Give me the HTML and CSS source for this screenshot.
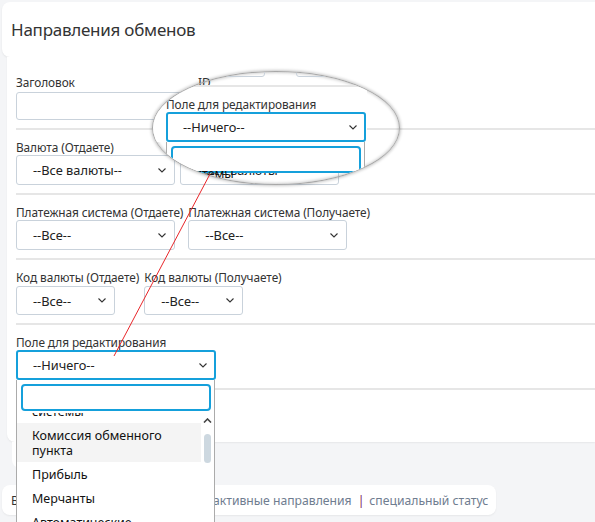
FILE: index.html
```html
<!DOCTYPE html>
<html lang="ru">
<head>
<meta charset="utf-8">
<title>Направления обменов</title>
<link rel="stylesheet" href="styles.css">
</head>
<body>
<div class="header">Направления обменов</div>

<div class="panel">
  <div class="row first">
    <div class="field"><div class="label">Заголовок</div><div class="input w-title"></div></div>
    <div class="field"><div class="label">ID</div><div class="input w-id"></div></div>
  </div>
  <div class="row">
    <div class="field"><div class="label">Валюта (Отдаете)</div><div class="select w159"><span>--Все валюты--</span><svg class="chev" width="8" height="5" viewBox="0 0 8 5"><polyline points="0.5,0.5 4,4 7.5,0.5"/></svg></div></div>
    <div class="field"><div class="label">Валюта (Получаете)</div><div class="select w159"><span>--Все валюты--</span><svg class="chev" width="8" height="5" viewBox="0 0 8 5"><polyline points="0.5,0.5 4,4 7.5,0.5"/></svg></div></div>
  </div>
  <div class="row">
    <div class="field"><div class="label">Платежная система (Отдаете)</div><div class="select w159"><span>--Все--</span><svg class="chev" width="8" height="5" viewBox="0 0 8 5"><polyline points="0.5,0.5 4,4 7.5,0.5"/></svg></div></div>
    <div class="field"><div class="label">Платежная система (Получаете)</div><div class="select w159"><span>--Все--</span><svg class="chev" width="8" height="5" viewBox="0 0 8 5"><polyline points="0.5,0.5 4,4 7.5,0.5"/></svg></div></div>
  </div>
  <div class="row">
    <div class="field"><div class="label">Код валюты (Отдаете)</div><div class="select w99 short"><span>--Все--</span><svg class="chev" width="8" height="5" viewBox="0 0 8 5"><polyline points="0.5,0.5 4,4 7.5,0.5"/></svg></div></div>
    <div class="field"><div class="label">Код валюты (Получаете)</div><div class="select w99 short"><span>--Все--</span><svg class="chev" width="8" height="5" viewBox="0 0 8 5"><polyline points="0.5,0.5 4,4 7.5,0.5"/></svg></div></div>
  </div>
  <div class="row">
    <div class="field"><div class="label">Поле для редактирования</div><div class="select focus w200"><span>--Ничего--</span><svg class="chev" width="8" height="5" viewBox="0 0 8 5"><polyline points="0.5,0.5 4,4 7.5,0.5"/></svg></div></div>
  </div>
  <div class="row empty"></div>
</div>
<div class="panel-foot"></div>

<div class="tabs">
  <span class="tab tab-all">Все направления</span>
  <span class="tab">активные направления</span>
  <span class="sep">|</span>
  <span class="tab">специальный статус</span>
</div>

<!-- open dropdown of "Поле для редактирования" -->
<div class="dropdown">
  <div class="search"></div>
  <div class="list">
    <div class="list-inner">
      <div class="item">Платежные<br>системы</div>
      <div class="item hover">Комиссия обменного пункта</div>
      <div class="item">Прибыль</div>
      <div class="item">Мерчанты</div>
      <div class="item">Автоматические выплаты</div>
    </div>
  </div>
  <svg class="sb-up" width="9" height="5" viewBox="0 0 9 5"><polyline points="1,4.5 4.5,1 8,4.5"/></svg>
  <div class="sb-thumb"></div>
</div>

<!-- magnifier callout -->
<div class="magnifier">
  <div class="m-box m-sel1"></div>
  <div class="m-box m-sel2"></div>
  <div class="m-line"></div>
  <div class="m-white"></div>
  <div class="m-label">Поле для редактирования</div>
  <div class="select focus w200 m-select"><span>--Ничего--</span><svg class="chev" width="8" height="5" viewBox="0 0 8 5"><polyline points="0.5,0.5 4,4 7.5,0.5"/></svg></div>
  <div class="m-drop">
    <div class="search"></div>
    <div class="m-text">системы</div>
  </div>
</div>

<svg class="arrow" width="595" height="522" viewBox="0 0 595 522"><line x1="210" y1="174" x2="114" y2="356"/></svg>
</body>
</html>
```

FILE: styles.css
```css
html, body {
  margin: 0;
  height: 522px;
  overflow: hidden;
}
body {
  position: relative;
  width: 595px;
  background: #f4f5f7;
  font-family: "Noto Sans", "Open Sans", sans-serif;
  color: #333;
}

.header {
  margin: 2px 0 0 2px;
  height: 55px;
  box-sizing: border-box;
  padding-left: 9px;
  display: flex;
  align-items: center;
  background: #fff;
  border-radius: 8px 0 0 8px;
  font-size: 17px;
  letter-spacing: -0.25px;
  color: #333;
  box-shadow: 0 1px 2px rgba(0, 0, 0, 0.07);
}

.panel {
  margin-left: 7px;
  height: 385px;
  box-sizing: border-box;
  padding-left: 9px;
  background: #fff;
  border-radius: 0 0 0 8px;
  display: flex;
  flex-direction: column;
  box-shadow: 0 1px 2px rgba(0, 0, 0, 0.06);
}
.row {
  display: flex;
  gap: 5px;
  padding: 9px 0 8px;
  border-top: 2px solid #e6e6e6;
}
.row.first {
  border-top: 0;
  padding-top: 17px;
}
.row.empty {
  flex: 1;
  padding: 0;
}
.field {
  display: flex;
  flex-direction: column;
}
.label {
  font-size: 11.85px;
  letter-spacing: -0.08px;
  line-height: 16px;
  white-space: nowrap;
  color: #333;
}
.first .label { margin-bottom: 2px; }

.input {
  height: 28px;
  box-sizing: border-box;
  border: 1px solid #c9d2db;
  border-radius: 3px;
  background: #fff;
}
.w-title { width: 177px; }
.w-id { width: 60px; }

.select {
  height: 30px;
  box-sizing: border-box;
  border: 1px solid #c9d2db;
  border-radius: 3px;
  background: #fff;
  display: flex;
  align-items: center;
  justify-content: space-between;
  padding: 0 8px 0 16px;
  font-size: 12.8px;
  color: #222;
  white-space: nowrap;
}
.select.short {
  height: 29px;
  margin-top: 1px;
}
.select.focus {
  border: 2px solid #15a0db;
  padding: 0 7px 0 15px;
}
.w159 { width: 159px; }
.w99 { width: 99px; }
.w200 { width: 200px; }
.chev { flex: none; }
.chev polyline, .sb-up polyline {
  fill: none;
  stroke: #333;
  stroke-width: 1.1;
}

.panel-foot {
  margin-left: 12px;
  width: 190px;
  height: 26px;
  background: #fff;
  border-radius: 0 0 0 8px;
}

.tabs {
  margin: 17px 0 0 2px;
  width: 494px;
  height: 30px;
  box-sizing: border-box;
  padding-left: 9px;
  display: flex;
  align-items: center;
  background: #fff;
  border-radius: 8px;
  font-size: 12.2px;
  color: #6f7d90;
  box-shadow: 0 1px 2px rgba(0, 0, 0, 0.06);
}
.tab { white-space: nowrap; flex: none; }
.tab-all { width: 202px; color: #333; }
.sep { flex: none; color: #7d1f5e; margin: 0 5px 0 6px; }

/* open dropdown */
.dropdown {
  position: absolute;
  left: 16px;
  top: 380px;
  width: 199px;
  height: 160px;
  box-sizing: border-box;
  border: 1px solid #ababab;
  border-top: 0;
  background: #fff;
}
.search {
  margin: 4px 0 0 4px;
  width: 190px;
  height: 27px;
  box-sizing: border-box;
  border: 2px solid #15a0db;
  border-radius: 4px;
  background: #fff;
}
.list {
  position: absolute;
  top: 33px;
  left: 0;
  width: 184px;
  bottom: 0;
  overflow: hidden;
}
.list-inner { margin-top: -29px; }
.item {
  padding: 4.5px 22px 4.5px 15px;
  font-size: 12.5px;
  line-height: 15px;
  color: #111;
}
.item.hover { background: #f4f4f4; }
.sb-up {
  position: absolute;
  left: 186px;
  top: 38px;
}
.sb-up polyline { stroke: #444; stroke-width: 1.6; }
.sb-thumb {
  position: absolute;
  left: 187px;
  top: 54px;
  width: 7px;
  height: 29px;
  border-radius: 4px;
  background: #cdd8e0;
}

/* magnifier */
.magnifier {
  position: absolute;
  left: 152px;
  top: 71px;
  width: 246px;
  height: 112px;
  border-radius: 50%;
  overflow: hidden;
  border: 1px solid #a8a8a8;
  box-shadow: 0 0 3px 1px rgba(0, 0, 0, 0.22), inset 0 0 3px 1px rgba(0, 0, 0, 0.18);
}
.m-box {
  position: absolute;
  top: -25px;
  width: 99px;
  height: 30px;
  box-sizing: border-box;
  border: 1px solid #c9d2db;
  border-radius: 3px;
}
.m-sel1 { left: 13px; }
.m-sel2 { left: 143px; }
.m-line {
  position: absolute;
  left: 13px;
  top: 13px;
  width: 300px;
  height: 2px;
  background: #e6e6e6;
}
.m-white {
  position: absolute;
  left: 0;
  top: 15px;
  width: 214px;
  height: 55px;
  background: #fff;
}
.m-label {
  position: absolute;
  left: 13px;
  top: 24px;
  font-size: 11.85px;
  letter-spacing: -0.08px;
  line-height: 16px;
  white-space: nowrap;
  color: #333;
}
.m-select {
  position: absolute;
  left: 13px;
  top: 40px;
}
.m-drop {
  position: absolute;
  left: 13px;
  top: 70px;
  width: 199px;
  height: 60px;
  box-sizing: border-box;
  border: 1px solid #ababab;
  border-top: 0;
  background: linear-gradient(#fff 0, #fff 31px, transparent 31px);
}
.m-text {
  position: absolute;
  left: 15px;
  top: 24px;
  font-size: 12.5px;
  line-height: 15px;
  color: #111;
}

.arrow {
  position: absolute;
  left: 0;
  top: 0;
  pointer-events: none;
}
.arrow line {
  stroke: #e8262a;
  stroke-width: 1;
}
```
